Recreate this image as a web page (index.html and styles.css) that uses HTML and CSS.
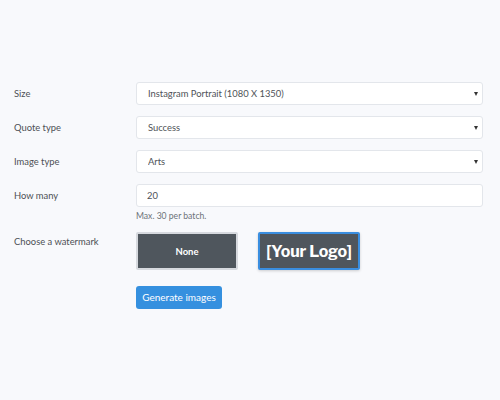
FILE: index.html
```html
<!DOCTYPE html>
<html lang="en">
<head>
<meta charset="utf-8">
<title>Generate quote images</title>
<link rel="stylesheet" href="styles.css">
</head>
<body>
<form class="generator">
  <label class="field-label" for="size">Size</label>
  <div class="select">
    <select id="size" class="control">
      <option>Instagram Portrait (1080 X 1350)</option>
    </select>
  </div>

  <label class="field-label" for="quote-type">Quote type</label>
  <div class="select">
    <select id="quote-type" class="control">
      <option>Success</option>
    </select>
  </div>

  <label class="field-label" for="image-type">Image type</label>
  <div class="select">
    <select id="image-type" class="control">
      <option>Arts</option>
    </select>
  </div>

  <label class="field-label" for="how-many">How many</label>
  <div class="field">
    <input id="how-many" class="control" type="text" value="20">
    <small class="help">Max. 30 per batch.</small>
  </div>

  <span class="field-label field-label--top">Choose a watermark</span>
  <div class="watermarks">
    <button type="button" class="watermark watermark--none">None</button>
    <button type="button" class="watermark watermark--logo is-selected">[Your Logo]</button>
  </div>

  <span></span>
  <div class="actions">
    <button type="submit" class="btn-primary">Generate images</button>
  </div>
</form>
</body>
</html>
```

FILE: styles.css
```css
html, body {
  margin: 0;
  background: #f8f9fc;
}

body {
  font-family: Lato, "Open Sans", sans-serif;
  color: #4a4d52;
}

.generator {
  display: grid;
  grid-template-columns: 122px 347px;
  row-gap: 11px;
  padding: 82px 0 0 14px;
}

.field-label {
  font-size: 9.4px;
  line-height: 23px;
  color: #4d5055;
}

.field-label--top {
  line-height: 13px;
  padding-top: 3px;
}

.control {
  display: block;
  box-sizing: border-box;
  width: 100%;
  height: 23px;
  margin: 0;
  padding: 0 11px;
  border: 1px solid #e3e6eb;
  border-radius: 3px;
  background: #fff;
  font-family: inherit;
  font-size: 9.4px;
  color: #4e5257;
  outline: none;
}

input.control {
  padding-left: 10px;
}

select.control {
  appearance: none;
  -webkit-appearance: none;
}

.select {
  position: relative;
}

.select::after {
  content: "";
  position: absolute;
  right: 5px;
  top: 10px;
  border-left: 2.5px solid transparent;
  border-right: 2.5px solid transparent;
  border-top: 4px solid #333;
  pointer-events: none;
}

.help {
  display: block;
  margin-top: 4px;
  font-size: 8.6px;
  line-height: 10px;
  color: #6c7278;
}

.watermarks {
  display: flex;
  gap: 20px;
}

.watermark {
  box-sizing: border-box;
  width: 102px;
  height: 38px;
  margin: 0;
  border-radius: 2px;
  background: #4f565d;
  color: #fff;
  font-weight: 700;
  cursor: pointer;
}

.watermark--none {
  border: 2px solid #d6d9de;
  font-family: Lato, sans-serif;
  font-size: 9.5px;
}

.watermark--logo {
  font-family: "Libre Franklin", Inter, "Liberation Sans", sans-serif;
  font-size: 16px;
  letter-spacing: -0.2px;
}

.watermark.is-selected {
  border: 2px solid #3a8ee0;
  box-shadow: 0 1px 3px rgba(0, 0, 0, 0.18);
}

.actions {
  padding-top: 4px;
}

.btn-primary {
  box-sizing: border-box;
  width: 86px;
  height: 23px;
  margin: 0;
  border: 0;
  border-radius: 3px;
  background: #3590df;
  color: #fff;
  font-family: inherit;
  font-size: 10px;
  cursor: pointer;
}
```
